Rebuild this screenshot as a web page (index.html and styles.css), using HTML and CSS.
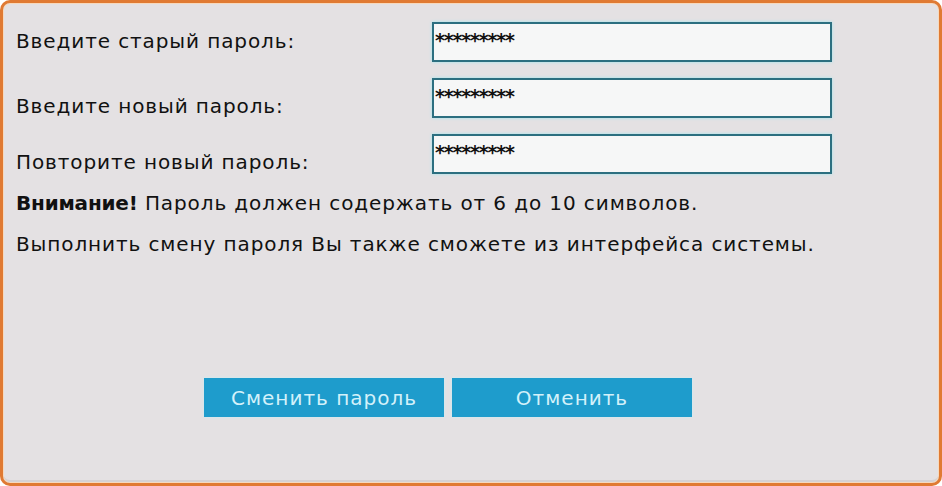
FILE: index.html
```html
<!DOCTYPE html>
<html lang="ru">
<head>
    <meta charset="UTF-8" />
    <title>Смена пароля</title>
    <link rel="stylesheet" href="styles.css">
</head>
<body>
    <div class="frame">
        <div class="fields">
            <div class="field first">
                <label for="old-pass">Введите старый пароль:</label>
                <input type="text" id="old-pass" value="*********" readonly>
            </div>
            <div class="field">
                <label for="new-pass">Введите новый пароль:</label>
                <input type="text" id="new-pass" value="*********" readonly>
            </div>
            <div class="field">
                <label for="repeat-pass">Повторите новый пароль:</label>
                <input type="text" id="repeat-pass" value="*********" readonly>
            </div>
        </div>

        <p class="note"><b>Внимание!</b> Пароль должен содержать от 6 до 10 символов.</p>
        <p class="note">Выполнить смену пароля Вы также сможете из интерфейса системы.</p>

        <div class="buttons">
            <button class="btn">Сменить пароль</button>
            <button class="btn">Отменить</button>
        </div>
    </div>
</body>
</html>
```

FILE: styles.css
```css
/* форма смены пароля */
html, body {
    margin: 0;
    padding: 0;
    background: #fff;
}
.frame {
    box-sizing: border-box;
    width: 942px;
    height: 486px;
    background: #e4e1e3;
    border: 3px solid #e07a33;
    border-radius: 10px;
    box-shadow: inset 0 0 0 1px #f6d9bd, inset 0 -3px 0 #d5d2d4;
    padding: 19px 0 0 13px;
    font-family: "DejaVu Sans", Verdana, sans-serif;
    font-size: 20px;
    line-height: 22px;
    color: #111;
    letter-spacing: 0.9px;
}
.fields {
    display: flex;
    flex-direction: column;
    gap: 16px;
}
.field {
    display: flex;
    align-items: flex-start;
    height: 40px;
}
.field label {
    width: 416px;
    padding-top: 17px;
}
.field.first label {
    padding-top: 8px;
}
.field input {
    box-sizing: border-box;
    width: 400px;
    height: 40px;
    margin: 0;
    border: 2px solid #2c6f80;
    background: #f6f7f7;
    box-shadow: 0 0 3px #9fe6f0;
    padding: 0 0 4px 1px;
    font-family: "DejaVu Sans", sans-serif;
    font-size: 19px;
    font-weight: bold;
    letter-spacing: -1.2px;
    color: #111;
    outline: none;
}
.note {
    margin: 18px 0 0 0;
}
.note + .note {
    margin-top: 19px;
}
.note b {
    letter-spacing: -0.2px;
}
.buttons {
    display: flex;
    gap: 8px;
    margin: 123px 0 0 188px;
}
.btn {
    width: 240px;
    height: 39px;
    background: #1e9ccc;
    border: none;
    border-radius: 0;
    box-shadow: 0 0 3px #c9eef8;
    color: #d3f1fa;
    font-family: "DejaVu Sans", Verdana, sans-serif;
    font-size: 20px;
    letter-spacing: 1px;
    cursor: pointer;
}
```
